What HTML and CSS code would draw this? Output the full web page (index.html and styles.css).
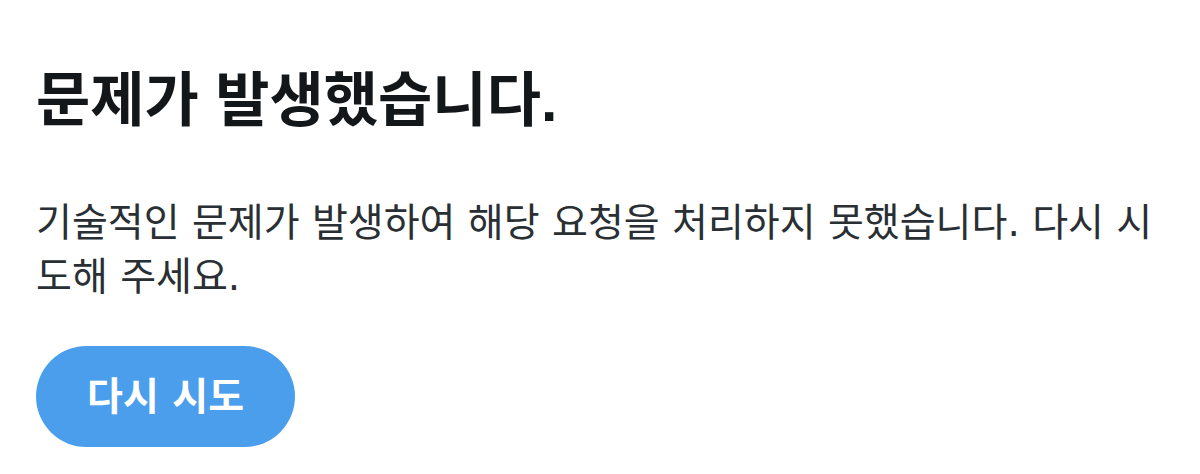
FILE: index.html
```html
<!DOCTYPE html>
<html lang="ko">

<head>
  <meta charset="UTF-8">
  <meta name="viewport" content="width=device-width, initial-scale=1.0">
  <title>문제가 발생했습니다.</title>
  <link rel="stylesheet" href="styles.css">
</head>

<body>
  <main class="error">
    <h1 class="error-title">문제가 발생했습니다.</h1>
    <p class="error-text">기술적인 문제가 발생하여 해당 요청을 처리하지 못했습니다. 다시 시도해 주세요.</p>
    <button type="button" class="retry">다시 시도</button>
  </main>
</body>

</html>
```

FILE: styles.css
```css
body {
  margin: 0;
  background-color: #ffffff;
  color: #292f33;
  font-family: "DejaVu Sans", "Noto Sans CJK KR", sans-serif;
}

.error {
  padding: 60px 36px 27px;
}

.error-title {
  margin: 0;
  color: #14171a;
  font-family: "Liberation Sans", "Noto Sans CJK KR", sans-serif;
  font-size: 59px;
  font-weight: bold;
  line-height: 82px;
}

.error-text {
  margin: 54px 0 42px;
  font-size: 39px;
  line-height: 54px;
  word-break: break-all;
}

.retry {
  display: block;
  padding: 0 51px;
  border: none;
  border-radius: 51px;
  background-color: #4a9eec;
  color: #ffffff;
  font-family: inherit;
  font-size: 39px;
  font-weight: bold;
  line-height: 101px;
  cursor: pointer;
}
```
